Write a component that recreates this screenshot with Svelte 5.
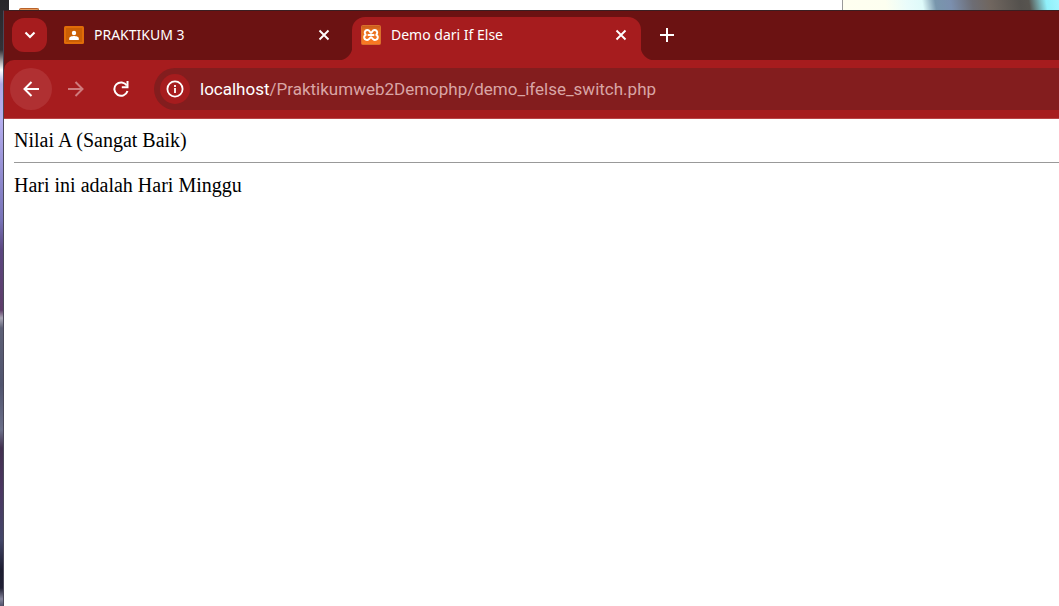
<script>
  let address = $state('localhost/Praktikumweb2Demophp/demo_ifelse_switch.php');
  let slash = $derived(address.indexOf('/'));
  let host = $derived(address.slice(0, slash));
  let path = $derived(address.slice(slash));
</script>

<div class="desktop">
  <div class="behind">
    <span class="behind-icon"></span>
    <div class="photo"></div>
  </div>

  <div class="window">
    <header class="tabstrip">
      <button class="search" aria-label="Search tabs">
        <svg width="12" height="8" viewBox="0 0 12 8"><path d="M1.5 1.5 6 6l4.5-4.5" fill="none" stroke="#fff" stroke-width="2.1" /></svg>
      </button>

      <div class="tab">
        <svg class="favicon" width="20" height="20" viewBox="0 0 20 20">
          <rect x="0" y="1" width="20" height="18" rx="1.5" fill="#e06c08" />
          <rect x="2" y="3" width="16" height="14" fill="#cb5f05" />
          <circle cx="10" cy="8" r="2.2" fill="#fff" />
          <path d="M5.2 15v-1.500c0-1.700 2.800-2.400 4.800-2.400s4.800.700 4.800 2.400V15z" fill="#fff" />
        </svg>
        <span class="title">PRAKTIKUM 3</span>
        <button class="close" aria-label="Close PRAKTIKUM 3">
          <svg width="12" height="12" viewBox="0 0 12 12"><path d="M1.5 1.5l9 9M10.5 1.5l-9 9" stroke="#fff" stroke-width="1.9" /></svg>
        </button>
      </div>

      <div class="tab active">
        <svg class="favicon" width="20" height="20" viewBox="0 0 20 20">
          <defs>
            <linearGradient id="orange" x2="0" y2="1">
              <stop offset="0" stop-color="#c65b1c" />
              <stop offset=".3" stop-color="#e9701f" />
              <stop offset="1" stop-color="#fb7a24" />
            </linearGradient>
          </defs>
          <rect x=".5" y=".5" width="19" height="19" rx="1" fill="url(#orange)" stroke="#d9702c" />
          <g fill="none" stroke="#fff" stroke-width="2" stroke-linecap="round" stroke-linejoin="round">
            <path d="M10 7.800C9 7.800 8.600 5 6.600 5 4.400 5 3.400 6.700 3.900 8.200 4.100 9 4.700 9.500 4.700 9.900 3.500 10.500 3 11.500 3.300 13c.4 1.600 2.200 2.200 3.700 1.800C8.600 14.400 8.900 12.200 10 12.200s1.400 2.200 3 2.600c1.500.4 3.300-.2 3.700-1.800.3-1.500-.2-2.500-1.400-3.100 0-.4.6-.9.8-1.700C16.600 6.700 15.600 5 13.400 5 11.400 5 11 7.800 10 7.800z" />
            <path d="M7.500 10h5" />
          </g>
        </svg>
        <span class="title">Demo dari If Else</span>
        <button class="close" aria-label="Close Demo dari If Else">
          <svg width="12" height="12" viewBox="0 0 12 12"><path d="M1.5 1.5l9 9M10.5 1.5l-9 9" stroke="#fff" stroke-width="1.9" /></svg>
        </button>
      </div>

      <button class="new" aria-label="New tab">
        <svg width="14" height="14" viewBox="0 0 14 14"><path d="M7 0v14M0 7h14" stroke="#fff" stroke-width="2" /></svg>
      </button>
    </header>

    <div class="chrome">
      <nav class="toolbar">
        <button class="nav back" aria-label="Back">
          <svg width="16" height="16" viewBox="0 0 16 16"><path d="M16 8H2M8.500 1 1.500 8l7 7" fill="none" stroke="#fff" stroke-width="2" /></svg>
        </button>
        <button class="nav" aria-label="Forward" disabled>
          <svg width="16" height="16" viewBox="0 0 16 16"><path d="M0 8h14M7.500 1l7 7-7 7" fill="none" stroke="#cf7b7d" stroke-width="2" /></svg>
        </button>
        <button class="nav" aria-label="Reload">
          <svg width="16" height="16" viewBox="0 0 16 16">
            <path d="M13.800 4.600A6.700 6.700 0 1 0 14.500 10" fill="none" stroke="#fff" stroke-width="2" />
            <path d="M14.500 0v6.200H8.800" fill="none" stroke="#fff" stroke-width="2" />
          </svg>
        </button>
        <div class="omnibox">
          <button class="info" aria-label="Site information">
            <svg width="18" height="18" viewBox="0 0 18 18">
              <circle cx="9" cy="9" r="7.600" fill="none" stroke="#fff" stroke-width="1.800" />
              <path d="M9 8v5M9 5v2" stroke="#fff" stroke-width="1.800" />
            </svg>
          </button>
          <a class="url" href={'http://' + address}>{host}<span>{path}</span></a>
        </div>
      </nav>
    </div>

    <main>
      <p>Nilai A (Sangat Baik)</p>
      <hr />
      <p>Hari ini adalah Hari Minggu</p>
    </main>
  </div>
</div>

<style>
  .desktop {
    display: flex;
    flex-direction: column;
    min-height: 100vh;
    padding-left: 3px;
    box-sizing: border-box;
    overflow: hidden;
    background: linear-gradient(#28262a 0, #343136 50px, #fff 70px, #b0a8e6 84px, #b5aeef 120px, #8883c8 190px, #7873b8 220px, #5b4680 250px, #5d3c68 310px, #aaa7b6 318px, #5d6076 328px, #50546e 385px, #6b6f89 430px, #42304f 448px, #4b3762 490px, #424668 540px, #1c1c30 570px, #202034 588px, #85859c 599px, #50506a 606px);
  }
  .behind {
    display: flex;
    justify-content: space-between;
    height: 10px;
    margin-left: 6px;
    padding-left: 10px;
    background: #fff;
  }
  .behind-icon {
    width: 18px;
    height: 1px;
    align-self: flex-end;
    border: 1px solid #b8622a;
    border-bottom: 0;
    border-radius: 2px 2px 0 0;
    background: #e79a5c;
  }
  .photo {
    width: 216px;
    border-left: 1px solid #999;
    background: linear-gradient(80deg, #fffff0 0, #fdfff0 20%, #e9fcfb 30%, #defafa 37%, #7896ac 43%, #7b8fae 50%, #6d6d74 60%, #70665f 68%, #54514d 82%, #57544f 86%, #8ff0fa 94%, #a5f5ff 100%);
  }
  .window {
    flex: 1;
    display: flex;
    flex-direction: column;
    border-top: 1px solid #3a1f22;
    border-left: 1px solid #4a4858;
    background: #fff;
  }
  button {
    display: flex;
    align-items: center;
    justify-content: center;
    padding: 0;
    border: 0;
    background: none;
  }
  .tabstrip {
    display: flex;
    align-items: flex-end;
    height: 49px;
    padding-left: 8px;
    background: #6b1212;
    color: #fff;
  }
  .search {
    width: 35px;
    height: 34px;
    margin-bottom: 8px;
    border-radius: 12px;
    background: #a61c1e;
  }
  .tab {
    position: relative;
    display: flex;
    align-items: center;
    width: 289px;
    height: 43px;
    margin-left: 8px;
    padding: 0 12px 8px 9px;
    box-sizing: border-box;
    font: 14px/20px "Noto Sans", "Open Sans", sans-serif;
  }
  .active {
    border-radius: 13px 13px 0 0;
    background: #a61c1e;
  }
  .active::before,
  .active::after {
    content: "";
    position: absolute;
    bottom: 0;
    width: 14px;
    height: 14px;
  }
  .active::before {
    right: 100%;
    background: radial-gradient(circle at 0 0, transparent 14px, #a61c1e 15px);
  }
  .active::after {
    left: 100%;
    background: radial-gradient(circle at 100% 0, transparent 14px, #a61c1e 15px);
  }
  .title {
    flex: 1;
    margin-left: 10px;
    white-space: nowrap;
  }
  .close {
    width: 16px;
    height: 16px;
  }
  .new {
    width: 34px;
    height: 34px;
    margin: 0 0 8px 9px;
  }
  .chrome {
    background: #6b1212;
  }
  .toolbar {
    display: flex;
    align-items: center;
    gap: 3px;
    height: 58px;
    padding-left: 6px;
    border-bottom: 1px solid #b94446;
    border-radius: 10px 0 0;
    background: #a61c1e;
  }
  .nav {
    width: 42px;
    height: 42px;
    border-radius: 50%;
  }
  .back {
    background: #b03032;
  }
  .omnibox {
    flex: 1;
    display: flex;
    align-items: center;
    gap: 10px;
    height: 42px;
    margin-left: 9px;
    padding-left: 6px;
    border-radius: 21px 0 0 21px;
    background: #831d1e;
  }
  .info {
    width: 30px;
    height: 30px;
    border-radius: 50%;
    background: #a61c1e;
  }
  .url {
    color: #fff;
    font: 17px/24px Roboto, "Open Sans", sans-serif;
    text-decoration: none;
    white-space: nowrap;
  }
  .url span {
    color: #d9a5a5;
  }
  main {
    padding: 9px 0 10px 10px;
    color: #000;
    font: 20px/24px "Liberation Serif", "Times New Roman", serif;
  }
  p {
    margin: 0;
  }
  hr {
    height: 1px;
    margin: 10px 0;
    border: 0;
    background: #999;
  }
</style>
